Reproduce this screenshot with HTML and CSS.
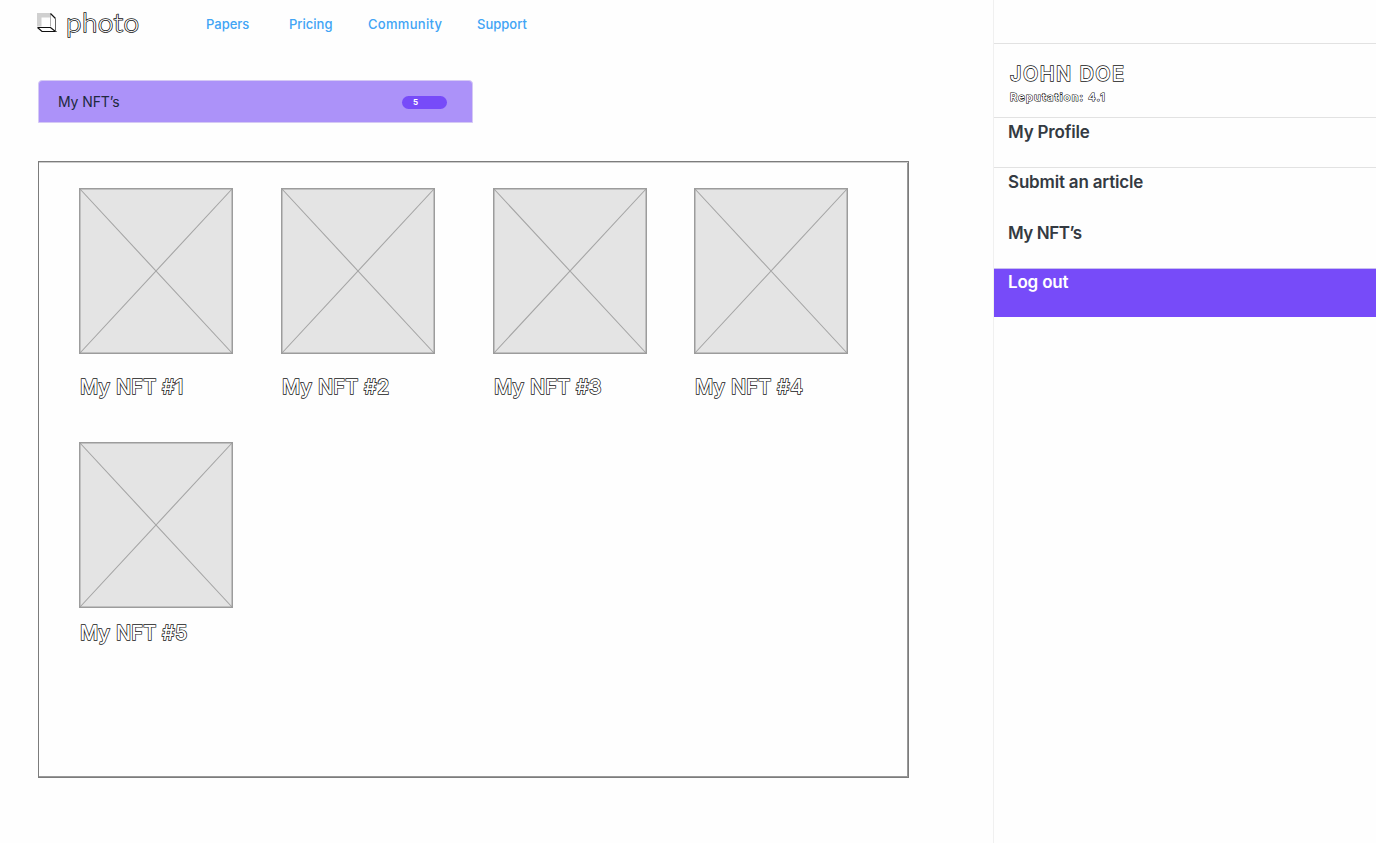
FILE: index.html
```html
<!DOCTYPE html>
<html lang="en">
<head>
<meta charset="utf-8">
<title>My NFT’s</title>
<link rel="stylesheet" href="styles.css">
</head>
<body>
<div class="page">
  <main class="main">
    <header class="header">
      <svg class="logo-mark" width="22" height="22" viewBox="0 0 22 22">
        <path d="M1 1H14V5.500H5.500V14.500H1Z" fill="#d0d0d0"/>
        <path d="M14.500 1.500V14.500" fill="none" stroke="#999" stroke-width=".8"/>
        <path d="M14.500 1.500L19.500 6.500M1.500 15.500H14.500L19.500 19.500H6L1.500 15.500" fill="none" stroke="#111" stroke-width="1.200"/>
        <path d="M19.500 6.500V19.500" fill="none" stroke="#666" stroke-width="1"/>
      </svg>
      <span class="logo-text outlined">photo</span>
      <nav class="nav">
        <a class="nav-link papers">Papers</a>
        <a class="nav-link pricing">Pricing</a>
        <a class="nav-link community">Community</a>
        <a class="nav-link support">Support</a>
      </nav>
    </header>
    <div class="tab"><span class="tab-label">My NFT’s</span><span class="badge">5</span></div>
    <section class="gallery">
      <article class="card"><svg class="thumb" viewBox="0 0 154 166"><path d="M1 1L153 165M153 1L1 165"/><rect x=".75" y=".75" width="152.500" height="164.500"/></svg><h2 class="title outlined">My NFT #1</h2></article>
      <article class="card"><svg class="thumb" viewBox="0 0 154 166"><path d="M1 1L153 165M153 1L1 165"/><rect x=".75" y=".75" width="152.500" height="164.500"/></svg><h2 class="title outlined">My NFT #2</h2></article>
      <article class="card"><svg class="thumb" viewBox="0 0 154 166"><path d="M1 1L153 165M153 1L1 165"/><rect x=".75" y=".75" width="152.500" height="164.500"/></svg><h2 class="title outlined">My NFT #3</h2></article>
      <article class="card"><svg class="thumb" viewBox="0 0 154 166"><path d="M1 1L153 165M153 1L1 165"/><rect x=".75" y=".75" width="152.500" height="164.500"/></svg><h2 class="title outlined">My NFT #4</h2></article>
      <article class="card card-last"><svg class="thumb" viewBox="0 0 154 166"><path d="M1 1L153 165M153 1L1 165"/><rect x=".75" y=".75" width="152.500" height="164.500"/></svg><h2 class="title outlined">My NFT #5</h2></article>
    </section>
  </main>
  <aside class="sidebar">
    <div class="profile">
      <div class="name outlined">JOHN DOE</div>
      <div class="reputation outlined">Reputation: 4.1</div>
    </div>
    <a class="item">My Profile</a>
    <a class="item">Submit an article</a>
    <a class="item plain">My NFT’s</a>
    <a class="item logout">Log out</a>
  </aside>
</div>
</body>
</html>
```
FILE: styles.css
```css
* { box-sizing: border-box; }
body { margin: 0; background: #fefefe; font-family: Inter, "Liberation Sans", sans-serif; overflow: hidden; }
.page { display: flex; width: 1376px; height: 843px; }
.main { width: 993px; flex: none; padding-left: 38px; }
.outlined { color: #fefefe; -webkit-text-stroke: 1.4px #111; paint-order: stroke fill; opacity: .99; }

.header { display: flex; align-items: center; height: 48px; margin-left: -2px; }
.logo-mark { flex: none; margin-top: -3px; }
.logo-text { width: 148px; margin: -4px 0 0 8px; font: 300 25px/40px Lato, sans-serif; letter-spacing: .4px; white-space: nowrap; transform: scaleX(1.12); transform-origin: left; }
.nav { display: flex; }
.nav-link { flex: none; font-size: 13px; line-height: 20px; font-weight: 500; color: #41a4f5; white-space: nowrap; }
.papers { width: 83px; margin-left: -8px; }
.pricing { width: 79px; }
.community { width: 109px; letter-spacing: .3px; }

.tab { display: flex; align-items: center; justify-content: space-between; width: 435px; height: 43px; margin-top: 32px; padding: 0 25px 0 19px; border: 1.5px solid #d5c9f5; border-radius: 4px 4px 0 0; background: #ac92f9; }
.tab-label { font-size: 14px; letter-spacing: -.1px; color: #20293e; }
.badge { width: 45px; height: 13px; margin-top: 2px; padding-left: 11px; border-radius: 7px; background: #774bf9; color: #fff; font-size: 8px; font-weight: 700; line-height: 13px; }

.gallery { display: grid; grid-template-columns: 202px 212px 201px 154px; grid-template-rows: 254px 254px; width: 871px; height: 617px; margin-top: 38px; padding: 26px 0 0 40px; border: 1px solid #7c7c7c; box-shadow: inset 0 1px #ccc, inset -1px -1px #999; }
.thumb { display: block; width: 154px; height: 166px; background: #e4e4e4; }
.thumb path { fill: none; stroke: #a5a5a5; stroke-width: 1.1; }
.thumb rect { fill: none; stroke: #9c9c9c; stroke-width: 1.5; }
.title { margin: 21px 0 0 1px; font-size: 20px; line-height: 24px; font-weight: 500; letter-spacing: .22px; white-space: nowrap; }
.card-last .title { margin-top: 13px; }

.sidebar { flex: 1; padding-top: 43px; border-left: 1px solid #f0f0f0; }
.profile { height: 74px; padding: 18px 0 0 16px; border-top: 1px solid #e2e2e2; }
.name { font-size: 20px; line-height: 24px; font-weight: 500; letter-spacing: 1.45px; }
.reputation { margin-top: 3px; font-size: 11px; line-height: 16px; font-weight: 600; letter-spacing: 1.2px; -webkit-text-stroke-width: 1.1px; }
.item { display: block; height: 50px; padding: 4px 0 0 14px; border-top: 1px solid #e2e2e2; color: #343a42; font-size: 17px; line-height: 21px; font-weight: 600; letter-spacing: -.18px; }
.plain { height: 51px; padding-top: 5px; letter-spacing: -.45px; border-color: transparent; }
.logout { height: 49px; padding-top: 3px; border-color: #c9bff0; background: #774bf9; color: #fff; }
```
